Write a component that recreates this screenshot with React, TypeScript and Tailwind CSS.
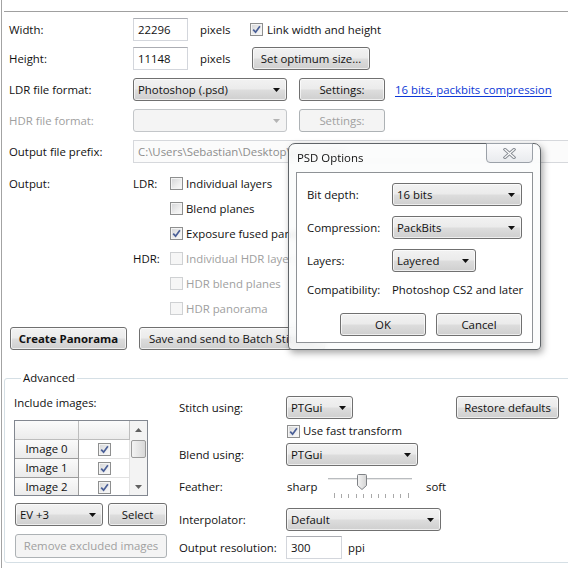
import React from "react";

type BtnProps = {
  children?: React.ReactNode;
  className?: string;
  disabled?: boolean;
  bold?: boolean;
};

function Arrow({ disabled = false }: { disabled?: boolean }) {
  return (
    <svg width="7" height="4" viewBox="0 0 7 4" className="shrink-0">
      <path d="M0 0H7L3.5 4Z" fill={disabled ? "#b4b4b4" : "#111111"} />
    </svg>
  );
}

function Button({ children, className = "", disabled = false, bold = false }: BtnProps) {
  return (
    <div
      className={`h-[23px] shrink-0 flex items-center justify-center rounded-[3px] border whitespace-nowrap overflow-hidden ${
        disabled
          ? "border-[#adb2b5] bg-[#f4f4f4] text-[#a0a0a0]"
          : "border-[#707070] bg-[linear-gradient(to_bottom,#f2f2f2_0%,#ebebeb_48%,#dddddd_52%,#cfcfcf_100%)] shadow-[inset_0_0_0_1px_rgba(255,255,255,0.65)]"
      } ${bold ? "font-bold" : ""} ${className}`}
    >
      {children}
    </div>
  );
}

function Combo({
  value,
  className = "",
  disabled = false,
}: {
  value?: string;
  className?: string;
  disabled?: boolean;
}) {
  return (
    <div
      className={`h-[23px] shrink-0 flex items-center justify-between pl-[4px] pr-[6px] rounded-[3px] border whitespace-nowrap ${
        disabled
          ? "border-[#c3c6c9] bg-[#f4f4f4]"
          : "border-[#707070] bg-[linear-gradient(to_bottom,#f2f2f2_0%,#ebebeb_48%,#dddddd_52%,#cfcfcf_100%)] shadow-[inset_0_0_0_1px_rgba(255,255,255,0.65)]"
      } ${className}`}
    >
      <span>{value}</span>
      <Arrow disabled={disabled} />
    </div>
  );
}

function Field({
  value,
  className = "",
  disabled = false,
}: {
  value: string;
  className?: string;
  disabled?: boolean;
}) {
  return (
    <div
      className={`h-[23px] shrink-0 flex items-center px-[4px] border whitespace-nowrap overflow-hidden ${
        disabled
          ? "border-[#d6d8dc] bg-[#fbfbfb] text-[#8d8d8d]"
          : "border-[#d3d6dc] border-t-[#abadb3] bg-white"
      } ${className}`}
    >
      {value}
    </div>
  );
}

function Check({ checked = false, disabled = false }: { checked?: boolean; disabled?: boolean }) {
  return (
    <span
      className={`w-[13px] h-[13px] shrink-0 border flex items-center justify-center ${
        disabled
          ? "border-[#cfd1d3] bg-[#f6f6f6]"
          : "border-[#8e8f8f] bg-[linear-gradient(135deg,#d3d4d6_0%,#eeeeee_60%,#fbfbfb_100%)] shadow-[inset_0_0_0_1px_#f4f4f4]"
      }`}
    >
      {checked && (
        <svg width="9" height="9" viewBox="0 0 9 9">
          <path d="M1.2 4.6 L3.6 7.2 L7.9 1.2" stroke="#4a5f97" strokeWidth="1.7" fill="none" />
        </svg>
      )}
    </span>
  );
}

function CheckRow({
  label,
  checked = false,
  disabled = false,
  side = "",
}: {
  label: string;
  checked?: boolean;
  disabled?: boolean;
  side?: string;
}) {
  return (
    <div className="h-[25px] flex items-center whitespace-nowrap">
      <span className="w-[37px] shrink-0">{side}</span>
      <Check checked={checked} disabled={disabled} />
      <span className={`ml-[3px] ${disabled ? "text-[#a0a0a0]" : ""}`}>{label}</span>
    </div>
  );
}

function Slider() {
  const ticks = Array.from({ length: 11 }, (_, i) => 9.5 + i * 7.4);
  return (
    <svg width="92" height="26" viewBox="0 0 92 26" className="shrink-0">
      <rect x="4" y="4" width="84" height="1" fill="#b9bcbf" />
      <rect x="4" y="5" width="84" height="1" fill="#e9e9e9" />
      {ticks.map((x, i) => (
        <line
          key={i}
          x1={Math.round(x) + 0.5}
          x2={Math.round(x) + 0.5}
          y1={i === 0 || i === 10 ? 19 : 20}
          y2="24"
          stroke="#a9a9a9"
          strokeWidth="1"
        />
      ))}
      <defs>
        <linearGradient id="thumb" x1="0" y1="0" x2="1" y2="0">
          <stop offset="0" stopColor="#f4f4f4" />
          <stop offset="1" stopColor="#d4d4d4" />
        </linearGradient>
      </defs>
      <path
        d="M33.5 1.5 Q33.5 0.5 34.5 0.5 H41.5 Q42.5 0.5 42.5 1.5 V11.5 L38 15.5 L33.5 11.5 Z"
        fill="url(#thumb)"
        stroke="#7f8286"
        strokeWidth="1"
      />
    </svg>
  );
}

function CloseGlyph() {
  return (
    <svg width="13" height="11" viewBox="0 0 13 11">
      <path d="M2 1.5 L11 9.5 M11 1.5 L2 9.5" stroke="#8a8f96" strokeWidth="3.2" strokeLinecap="square" />
      <path d="M2 1.5 L11 9.5 M11 1.5 L2 9.5" stroke="#ffffff" strokeWidth="1.2" strokeLinecap="square" />
    </svg>
  );
}

function ImageRow({ name }: { name: string }) {
  return (
    <div className="h-[19px] flex shrink-0">
      <div className="w-[64px] shrink-0 flex items-center justify-center border-r border-b border-[#9c9c9c] bg-[linear-gradient(to_bottom,#fafafa,#ebebeb)]">
        {name}
      </div>
      <div className="w-[51px] shrink-0 flex items-center justify-center border-r border-b border-[#e2e2e2] bg-white">
        <Check checked />
      </div>
    </div>
  );
}

export default function App() {
  return (
    <div className="relative w-[568px] h-[568px] overflow-hidden bg-white text-[11.4px] leading-[16px] text-[#111111] font-['Open_Sans','Noto_Sans',sans-serif]">
      <div className="ml-[1px] h-full border-l border-[#a3a3a3] flex flex-col">
        <div className="h-[11px] shrink-0" />
        <div className="ml-[2px] h-px shrink-0 bg-[#a0a0a0]" />

        <div className="pl-[7px] flex flex-col">
          {/* Size */}
          <div className="mt-[6px] h-[23px] flex items-center whitespace-nowrap">
            <span className="w-[124px] shrink-0">Width:</span>
            <Field value="22296" className="w-[55px]" />
            <span className="ml-[12px] w-[50px] shrink-0">pixels</span>
            <Check checked />
            <span className="ml-[4px]">Link width and height</span>
          </div>
          <div className="mt-[6px] h-[23px] flex items-center whitespace-nowrap">
            <span className="w-[124px] shrink-0">Height:</span>
            <Field value="11148" className="w-[55px]" />
            <span className="ml-[12px] w-[52px] shrink-0">pixels</span>
            <Button className="w-[118px]">Set optimum size...</Button>
          </div>

          {/* Formats */}
          <div className="mt-[8px] h-[23px] flex items-center whitespace-nowrap">
            <span className="w-[124px] shrink-0">LDR file format:</span>
            <Combo value="Photoshop (.psd)" className="w-[154px]" />
            <Button className="ml-[12px] w-[86px]">Settings:</Button>
            <span className="ml-[10px] text-[#0b37d6] underline underline-offset-[2px]">
              16 bits, packbits compression
            </span>
          </div>
          <div className="mt-[8px] h-[23px] flex items-center whitespace-nowrap">
            <span className="w-[124px] shrink-0 text-[#a0a0a0]">HDR file format:</span>
            <Combo className="w-[154px]" disabled />
            <Button className="ml-[12px] w-[86px]" disabled>
              Settings:
            </Button>
          </div>
          <div className="mt-[8px] h-[23px] flex items-center whitespace-nowrap">
            <span className="w-[124px] shrink-0">Output file prefix:</span>
            <Field value="C:\Users\Sebastian\Desktop\panorama" className="w-[450px]" disabled />
          </div>

          {/* Output */}
          <div className="mt-[8px] flex">
            <div className="w-[124px] shrink-0 h-[25px] flex items-center">Output:</div>
            <div className="flex flex-col">
              <CheckRow side="LDR:" label="Individual layers" />
              <CheckRow label="Blend planes" />
              <CheckRow label="Exposure fused panorama" checked />
              <CheckRow side="HDR:" label="Individual HDR layers" disabled />
              <CheckRow label="HDR blend planes" disabled />
              <CheckRow label="HDR panorama" disabled />
            </div>
          </div>

          <div className="mt-[6px] ml-[1px] flex items-center">
            <Button className="w-[117px]" bold>
              Create Panorama
            </Button>
            <Button className="ml-[12px] w-[186px] !justify-start pl-[9px]">
              Save and send to Batch Stitcher
            </Button>
          </div>
        </div>

        {/* Advanced */}
        <fieldset className="mt-[20px] ml-[2px] w-[580px] h-[193px] shrink-0 border border-[#d5dfe5] rounded-[3px] pl-[9px]">
          <legend className="ml-[7px] px-[2px] leading-[16px]">Advanced</legend>
          <div className="flex">
            <div className="w-[153px] shrink-0 flex flex-col">
              <div className="mt-[9px] h-[16px] flex items-center">Include images:</div>
              <div className="mt-[9px] w-[134px] h-[76px] border border-[#828790] flex overflow-hidden">
                <div className="w-[115px] shrink-0 flex flex-col">
                  <div className="h-[19px] flex shrink-0">
                    <div className="w-[64px] shrink-0 border-r border-b border-[#bdbdbd] bg-[linear-gradient(to_bottom,#fbfbfb,#ececec)]" />
                    <div className="w-[51px] shrink-0 border-r border-b border-[#bdbdbd] bg-[linear-gradient(to_bottom,#fbfbfb,#ececec)]" />
                  </div>
                  <ImageRow name="Image 0" />
                  <ImageRow name="Image 1" />
                  <ImageRow name="Image 2" />
                </div>
                <div className="w-[17px] shrink-0 bg-[#f3f3f3] flex flex-col items-center">
                  <div className="h-[17px] w-full flex items-center justify-center">
                    <svg width="7" height="4" viewBox="0 0 7 4">
                      <path d="M0 4H7L3.5 0Z" fill="#606060" />
                    </svg>
                  </div>
                  <div className="mt-[2px] w-[15px] h-[18px] rounded-[2px] border border-[#9a9a9a] bg-[linear-gradient(to_right,#f3f3f3,#d8d8d8)]" />
                  <div className="flex-1" />
                  <div className="h-[17px] w-full flex items-center justify-center">
                    <svg width="7" height="4" viewBox="0 0 7 4">
                      <path d="M0 0H7L3.5 4Z" fill="#606060" />
                    </svg>
                  </div>
                </div>
              </div>
              <div className="mt-[7px] ml-[1px] flex items-center">
                <Combo value="EV +3" className="w-[88px]" />
                <Button className="ml-[5px] w-[59px]">Select</Button>
              </div>
              <Button className="mt-[8px] ml-[1px] w-[152px] h-[24px]" disabled>
                Remove excluded images
              </Button>
            </div>

            <div className="ml-[12px] flex flex-col whitespace-nowrap">
              <div className="mt-[10px] h-[23px] flex items-center">
                <span className="w-[107px] shrink-0">Stitch using:</span>
                <Combo value="PTGui" className="w-[67px]" />
                <Button className="ml-[103px] w-[103px]">Restore defaults</Button>
              </div>
              <div className="mt-[4px] h-[16px] flex items-center">
                <span className="w-[108px] shrink-0" />
                <Check checked />
                <span className="ml-[3px]">Use fast transform</span>
              </div>
              <div className="mt-[4px] h-[23px] flex items-center">
                <span className="w-[107px] shrink-0">Blend using:</span>
                <Combo value="PTGui" className="w-[132px]" />
              </div>
              <div className="mt-[8px] h-[26px] flex items-center">
                <span className="w-[108px] shrink-0">Feather:</span>
                <span className="w-[37px] shrink-0">sharp</span>
                <Slider />
                <span className="ml-[10px]">soft</span>
              </div>
              <div className="mt-[8px] h-[23px] flex items-center">
                <span className="w-[107px] shrink-0">Interpolator:</span>
                <Combo value="Default" className="w-[155px]" />
              </div>
              <div className="mt-[5px] h-[23px] flex items-center">
                <span className="w-[107px] shrink-0">Output resolution:</span>
                <Field value="300" className="w-[56px]" />
                <span className="ml-[6px]">ppi</span>
              </div>
            </div>
          </div>
        </fieldset>
      </div>

      {/* PSD Options dialog window, floating over the main panel */}
      <div className="absolute left-[288px] top-[143px] w-[253px] h-[207px] rounded-t-[7px] rounded-b-[4px] border border-[#5f6468] bg-[rgba(250,251,252,0.84)] backdrop-blur-[3px] shadow-[2px_3px_7px_rgba(0,0,0,0.35)] flex flex-col">
        <div className="h-[28px] shrink-0 flex items-start justify-between">
          <span className="pl-[8px] pt-[6px] leading-[16px]">PSD Options</span>
          <div className="mr-[7px] mt-[-1px] w-[47px] h-[20px] rounded-b-[4px] border border-[#9ba1a8] bg-[linear-gradient(to_bottom,#fbfbfc,#e9ebee)] flex items-center justify-center">
            <CloseGlyph />
          </div>
        </div>
        <div className="ml-[7px] w-[237px] h-[171px] border border-[#8e9296] bg-white pl-[10px] flex flex-col whitespace-nowrap">
          <div className="mt-[10px] h-[23px] flex items-center">
            <span className="w-[85px] shrink-0">Bit depth:</span>
            <Combo value="16 bits" className="w-[130px]" />
          </div>
          <div className="mt-[10px] h-[23px] flex items-center">
            <span className="w-[85px] shrink-0">Compression:</span>
            <Combo value="PackBits" className="w-[130px]" />
          </div>
          <div className="mt-[10px] h-[23px] flex items-center">
            <span className="w-[85px] shrink-0">Layers:</span>
            <Combo value="Layered" className="w-[84px]" />
          </div>
          <div className="mt-[10px] h-[16px] flex items-center">
            <span className="w-[85px] shrink-0">Compatibility:</span>
            <span>Photoshop CS2 and later</span>
          </div>
          <div className="mt-[15px] flex items-center">
            <Button className="ml-[33px] w-[86px]">OK</Button>
            <Button className="ml-[10px] w-[86px]">Cancel</Button>
          </div>
        </div>
      </div>
    </div>
  );
}
